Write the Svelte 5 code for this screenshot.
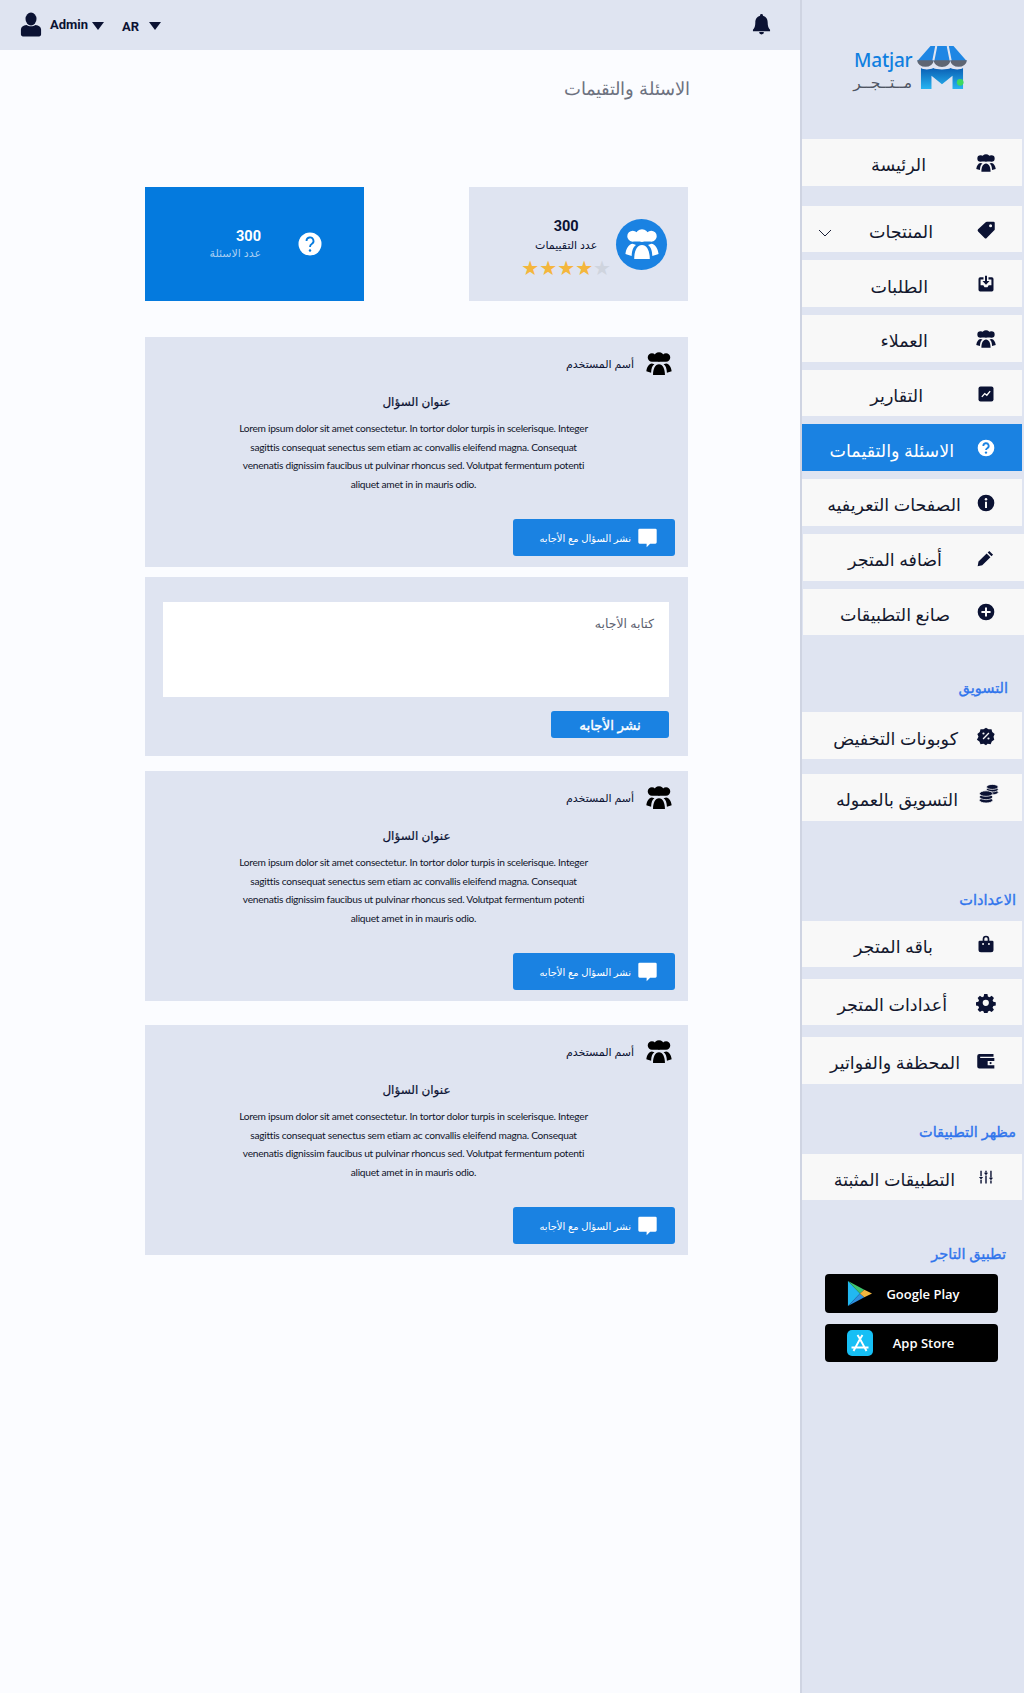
<script>
  const users = 'M1.600 5a3.900 3.900 0 1 0 7.800 0a3.900 3.900 0 1 0-7.800 0zM14.600 5a3.900 3.900 0 1 0 7.800 0a3.900 3.900 0 1 0-7.800 0zM7.500 4.500a4.500 4.500 0 1 0 9 0a4.500 4.500 0 1 0-9 0zM5.500 5v3.800h13V5zM6.500 21C6.500 15.500 8.500 11.200 12 11.200S17.500 15.500 17.500 21zM.3 17.600C.8 13.600 2.600 10.800 5.400 10.400L7.800 11.200C5.800 12.500 4.900 14.800 4.700 19zM23.700 17.600C23.200 13.600 21.400 10.800 18.600 10.400L16.200 11.200C18.200 12.500 19.100 14.800 19.300 19z';
  const menuA = [
    { t: 'الرئيسة', r: 52, m: 0, i: 'users' },
    { t: 'المنتجات', r: 45, m: 20, i: 'tag', chev: true },
    { t: 'الطلبات', r: 50, m: 8, i: 'inbox' },
    { t: 'العملاء', r: 50, m: 8, i: 'users' },
    { t: 'التقارير', r: 55, m: 8, i: 'chart' },
    { t: 'الاسئلة والتقيمات', r: 24, m: 8, i: 'help', on: true },
    { t: 'الصفحات التعريفيه', r: 17, m: 8, i: 'info' },
    { t: 'أضافه المتجر', r: 36, m: 8, i: 'pen', ind: true },
    { t: 'صانع التطبيقات', r: 28, m: 8, i: 'plus', ind: true }
  ];
  const menuB = [
    { t: 'كوبونات التخفيض', r: 20, m: 0, i: 'badge' },
    { t: 'التسويق بالعموله', r: 20, m: 15, i: 'coins' }
  ];
  const menuC = [
    { t: 'باقه المتجر', r: 45, m: 0, i: 'bag' },
    { t: 'أعدادات المتجر', r: 31, m: 11.5, i: 'gear' },
    { t: 'المحظفة والفواتير', r: 18, m: 11.5, i: 'wallet' }
  ];
  const menuD = [{ t: 'التطبيقات المثبتة', r: 23, m: 0, i: 'sliders' }];
  const lorem = 'Lorem ipsum dolor sit amet consectetur. In tortor dolor turpis in scelerisque. Integer sagittis consequat senectus sem etiam ac convallis eleifend magna. Consequat venenatis dignissim faucibus ut pulvinar rhoncus sed. Volutpat fermentum potenti aliquet amet in in mauris odio.';
</script>

{#snippet icon(name)}
  <svg class="ic ic-{name}" viewBox={name === 'users' ? '0 0 24 21' : '0 0 24 24'} aria-hidden="true">
    {#if name === 'users'}
      <path d={users} />
    {:else if name === 'tag'}
      <path d="M13 2h8a1.500 1.500 0 0 1 1.500 1.500V11a2 2 0 0 1-.6 1.400L12.800 21.500a1.800 1.800 0 0 1-2.500 0L2.500 13.700a1.800 1.800 0 0 1 0-2.500l9.100-8.600A2 2 0 0 1 13 2zM17.500 5.200a1.800 1.800 0 1 0 0 3.600 1.800 1.800 0 0 0 0-3.600z" fill-rule="evenodd" />
    {:else if name === 'inbox'}
      <path d="M5 4h4v2.500H5.500v7h3.300l1.400 2.500h3.600l1.400-2.500h3.300v-7H15V4h4a2 2 0 0 1 2 2v13a2 2 0 0 1-2 2H5a2 2 0 0 1-2-2V6a2 2 0 0 1 2-2zM10.800 2h2.400v6.500h3L12 13 7.800 8.500h3z" />
    {:else if name === 'chart'}
      <rect x="3" y="3" width="18" height="18" rx="2.500" />
      <path d="M7 15.500l3.500-4 2.500 2 4-5" fill="none" stroke="#fff" stroke-width="1.600" />
    {:else if name === 'help'}
      <circle cx="12" cy="12" r="10" />
      <path d="M8.800 9.500a3.200 3.200 0 1 1 4.700 2.800c-1 .6-1.500 1-1.500 2.200" fill="none" stroke="var(--cut)" stroke-width="2.200" />
      <circle cx="12" cy="17.500" r="1.400" fill="var(--cut)" />
    {:else if name === 'info'}
      <circle cx="12" cy="12" r="10" />
      <circle cx="12" cy="7.500" r="1.500" fill="#f8f8f8" />
      <rect x="10.800" y="10.500" width="2.400" height="7.500" fill="#f8f8f8" />
    {:else if name === 'pen'}
      <path d="M16 3.500l4.500 4.500-2 2L14 5.500zM12.800 6.700l4.500 4.500-9.800 9.600-5.500 1 1-5.500z" />
    {:else if name === 'plus'}
      <circle cx="12" cy="12" r="10" />
      <path d="M12 6.500v11M6.500 12h11" stroke="#f8f8f8" stroke-width="2.400" />
    {:else if name === 'badge'}
      <path d="M12 2l3 2 3.600-.2.900 3.500 2.900 2.200L21 13l.9 3.500-3 2-1.300 3.300-3.600-.5L12 23l-3-1.700-3.600.5-1.300-3.300-3-2L3 13 1.600 9.500l2.900-2.200.9-3.500L9 4z" />
      <path d="M8.500 15.500l7-7" stroke="#f8f8f8" stroke-width="1.600" />
      <circle cx="9" cy="9" r="1.300" fill="#f8f8f8" /><circle cx="15" cy="15" r="1.300" fill="#f8f8f8" />
    {:else if name === 'coins'}
      <g stroke="#f8f8f8" stroke-width=".9">
        <ellipse cx="16" cy="10" rx="7" ry="3" />
        <ellipse cx="16" cy="6.500" rx="7" ry="3" />
        <ellipse cx="16" cy="3.500" rx="7" ry="3" />
        <ellipse cx="8.500" cy="19.500" rx="8" ry="3.300" />
        <ellipse cx="8.500" cy="15.500" rx="8" ry="3.300" />
        <ellipse cx="8.500" cy="11.500" rx="8" ry="3.300" />
      </g>
    {:else if name === 'bag'}
      <path d="M8 8V6a4 4 0 0 1 8 0v2h3.500a1.500 1.500 0 0 1 1.500 1.500V19a3 3 0 0 1-3 3H6a3 3 0 0 1-3-3V9.500A1.500 1.500 0 0 1 4.500 8zm2 0h4V6a2 2 0 0 0-4 0z" fill-rule="evenodd" />
      <circle cx="8.500" cy="12" r="1.200" fill="#f8f8f8" /><circle cx="15.500" cy="12" r="1.200" fill="#f8f8f8" />
    {:else if name === 'gear'}
      <path fill-rule="evenodd" d="M10 1.500h4l.6 3 2 .9 2.600-1.700 2.800 2.800-1.700 2.600.9 2 3 .6v4l-3 .6-.9 2 1.700 2.600-2.800 2.800-2.600-1.700-2 .9-.6 3h-4l-.6-3-2-.9-2.600 1.700-2.800-2.800 1.700-2.600-.9-2-3-.6v-4l3-.6.900-2-1.700-2.600 2.800-2.800 2.600 1.700 2-.9zM12 8.500a3.800 3.800 0 1 0 0 7.600 3.800 3.800 0 0 0 0-7.600z" transform="translate(0 -.3) scale(.98)" />
    {:else if name === 'wallet'}
      <path fill-rule="evenodd" d="M4 3.500h17v3.500H5v1.500h17V21H4a2.500 2.500 0 0 1-2.500-2.500V6A2.500 2.500 0 0 1 4 3.500zM14 12v5h8v-5z" />
      <circle cx="17.500" cy="14.500" r="1.300" />
    {:else if name === 'sliders'}
      <path d="M5 3v8M5 16v5M12 3v3M12 10v11M19 3v10M19 17v4" fill="none" stroke="currentColor" stroke-width="2" />
      <path d="M2 12h6l-3 3.500zM9 6h6l-3 3.500zM16 13h6l-3 3.500z" />
    {/if}
  </svg>
{/snippet}

{#snippet item(m)}
  <div class="item" class:on={m.on} class:ind={m.ind} style="margin-top:{m.m}px">
    {#if m.chev}
      <svg class="chev" viewBox="0 0 14 8" aria-hidden="true"><path d="M1 1l6 6 6-6" fill="none" stroke="#1a1f36" stroke-width="1" /></svg>
    {/if}
    <span class="item-ic">{@render icon(m.i)}</span>
    <span class="item-t" style="margin-right:{m.r}px">{m.t}</span>
  </div>
{/snippet}

{#snippet question()}
  <article class="panel q">
    <header class="q-head">
      <svg class="q-user" viewBox="0 0 24 21" aria-hidden="true"><path d={users} /></svg>
      <span>أسم المستخدم</span>
    </header>
    <h3>عنوان السؤال</h3>
    <p dir="ltr">{lorem}</p>
    <button class="post">
      <svg viewBox="0 0 24 24" aria-hidden="true"><path d="M3 2h18a1.500 1.500 0 0 1 1.500 1.500v14A1.500 1.500 0 0 1 21 19h-6l-4 4v-4H3a1.500 1.500 0 0 1-1.500-1.500v-14A1.500 1.500 0 0 1 3 2z" /></svg>
      <span>نشر السؤال مع الأجابه</span>
    </button>
  </article>
{/snippet}

<div class="page">
  <main>
    <div class="topbar">
      <div class="top-left">
        <svg class="person" viewBox="0 0 24 26" aria-hidden="true"><ellipse cx="12" cy="7" rx="6" ry="7" /><path d="M7 13.500c3 2 7 2 10 0 3.500.5 6 2 6 5V24a2 2 0 0 1-2 2H3a2 2 0 0 1-2-2v-5.500c0-3 2.500-4.500 6-5z" /></svg>
        <b class="admin">Admin</b>
        <i class="tri"></i>
        <b class="lang">AR</b>
        <i class="tri"></i>
      </div>
      <svg class="bell" viewBox="0 0 20 22" aria-hidden="true"><path d="M10 0a1.500 1.500 0 0 1 1.500 1.700C15 2.500 16.500 5.500 16.500 9c0 4 1 6 2.500 7.500V18H1v-1.500C2.500 15 3.500 13 3.500 9c0-3.500 1.500-6.500 5-7.300A1.500 1.500 0 0 1 10 0zM7.500 19h5a2.500 2.500 0 0 1-5 0z" /></svg>
    </div>

    <div class="content">
      <h1>الاسئلة والتقيمات</h1>
      <div class="stats">
        <section class="stat grey">
          <span class="circle"><svg viewBox="0 0 24 21" aria-hidden="true"><path d={users} /></svg></span>
          <div class="stat-txt">
            <strong>300</strong>
            <small>عدد التقييمات</small>
            <div class="stars" dir="ltr">
              <span class="g">★</span><span class="g">★</span><span class="g">★</span><span class="g">★</span><span class="e">★</span>
            </div>
          </div>
        </section>
        <section class="stat blue">
          <svg class="qmark" viewBox="0 0 24 24" aria-hidden="true"><circle cx="12" cy="12" r="11.500" fill="#fff" /><path d="M8.500 9a3.500 3.500 0 1 1 5.200 3c-1.200.7-1.700 1.300-1.700 3" fill="none" stroke="#047ade" stroke-width="1.800" /><circle cx="12" cy="18.500" r="1.200" fill="#047ade" /></svg>
          <div class="stat-txt">
            <strong>300</strong>
            <small>عدد الاسئلة</small>
          </div>
        </section>
      </div>

      {@render question()}

      <section class="panel answer">
        <div class="ta">كتابه الأجابه</div>
        <button class="publish">نشر الأجابه</button>
      </section>

      <div class="gap15">{@render question()}</div>
      <div class="gap24">{@render question()}</div>
    </div>
  </main>

  <aside>
    <div class="logo" dir="ltr">
      <div class="logo-t">
        <span class="l-en">Matjar</span>
        <span class="l-ar" dir="rtl">مــتــجــر</span>
      </div>
      <svg class="l-mark" viewBox="0 0 52 46" aria-hidden="true">
        <defs><linearGradient id="lg" x1="0" y1="0" x2="0" y2="1"><stop offset="0" stop-color="#0a5fb4" /><stop offset="1" stop-color="#27b5f2" /></linearGradient></defs>
        <path d="M14 0h24l14 16H0z" fill="#1e86e4" />
        <path d="M0 15a8.670 7 0 0 0 17.330 0 8.670 7 0 0 0 17.340 0 8.670 7 0 0 0 17.330 0z" fill="#5f6673" />
        <path d="M20 0l-3 15M32 0l3 15" stroke="#dfe4f1" stroke-width="2.200" />
        <path d="M4 23c3 2 9 2 13 0 3 2 15 2 18 0 4 2 10 2 13 0v22H37V31l-11 9-11-9v14H4z" fill="url(#lg)" />
        <circle cx="45" cy="38" r="3.500" fill="#3ed95f" />
      </svg>
    </div>

    {#each menuA as m}{@render item(m)}{/each}
    <h4 class="h-mark">التسويق</h4>
    {#each menuB as m}{@render item(m)}{/each}
    <h4 class="h-set">الاعدادات</h4>
    {#each menuC as m}{@render item(m)}{/each}
    <h4 class="h-look">مظهر التطبيقات</h4>
    {#each menuD as m}{@render item(m)}{/each}
    <h4 class="h-app">تطبيق التاجر</h4>

    <div class="store first" dir="ltr">
      <svg class="st-ic" viewBox="0 0 26 28" aria-hidden="true">
        <path d="M1 1l12.500 13L1 27z" fill="#22b8f0" />
        <path d="M1 1l17 9-4.500 4z" fill="#3fc46e" />
        <path d="M1 27l17-9-4.500-4z" fill="#2f8fe0" />
        <path d="M18 10l8 4-8 4-4.500-4z" fill="#f3b63f" />
      </svg>
      <span>Google Play</span>
    </div>
    <div class="store" dir="ltr">
      <svg class="st-ic as" viewBox="0 0 26 26" aria-hidden="true">
        <rect width="26" height="26" rx="5" fill="#16bff5" />
        <path d="M13 9L6.500 21M13 9l6.500 12M10.500 5L13 9M15.500 5L13 9M4.500 17.500h17" stroke="#fff" stroke-width="1.900" fill="none" />
      </svg>
      <span>App Store</span>
    </div>
  </aside>
</div>

<style>
  :global(body) { margin: 0; background: #fbfcff; }
  .page {
    --ink: #0b1233;
    direction: ltr;
    display: flex;
    width: 1024px;
    min-height: 1693px;
    font-family: "Open Sans", "Noto Sans", "DejaVu Sans", sans-serif;
    color: var(--ink);
  }
  main { width: 800px; flex: none; }
  .topbar {
    height: 50px;
    background: #dfe4f1;
    display: flex;
    align-items: center;
    justify-content: space-between;
    padding: 0 29px 0 20px;
    box-sizing: border-box;
  }
  .top-left { display: flex; align-items: center; }
  .person { width: 22px; height: 25px; fill: var(--ink); margin-top: -2px; }
  .admin { font-family: Roboto, sans-serif; font-size: 13px; margin-left: 8px; margin-top: -2px; }
  .lang { font-family: Roboto, sans-serif; font-size: 13px; margin-left: 18px; margin-right: 6px; margin-top: 2px; }
  .tri { width: 0; height: 0; border-left: 6px solid transparent; border-right: 6px solid transparent; border-top: 8px solid var(--ink); margin-left: 4px; margin-top: 2px; }
  .bell { width: 19px; height: 21px; fill: var(--ink); margin-top: -1px; }

  .content { direction: rtl; padding: 25px 112px 0 145px; }
  h1 { margin: 0 -2px 0 0; font-size: 17.500px; font-weight: 300; line-height: 26px; color: #6d7280; }
  .stats { display: flex; justify-content: space-between; margin-top: 86px; margin-bottom: 36px; }
  .stat { width: 219px; height: 114px; box-sizing: border-box; display: flex; align-items: center; }
  .grey { background: #dfe4f1; padding-right: 21px; gap: 5px; }
  .grey .stat-txt { margin-top: 8px; }
  .blue { background: #047ade; color: #fff; padding-right: 42px; gap: 37px; }
  .circle { width: 51px; height: 51px; border-radius: 50%; background: #1a82e2; display: flex; align-items: center; justify-content: center; flex: none; }
  .circle svg { width: 34px; height: 30px; fill: #fff; }
  .stat-txt { display: flex; flex-direction: column; align-items: center; }
  .blue .stat-txt { align-items: flex-start; margin-top: -2px; }
  .stat-txt strong { font-size: 14.500px; line-height: 18px; font-family: Roboto, sans-serif; }
  .stat-txt small { font-size: 11px; line-height: 18px; }
  .blue small { color: #a9cff3; line-height: 13px; }
  .qmark { width: 24px; height: 24px; flex: none; }
  .stars { display: flex; font-size: 20px; line-height: 22px; margin-top: 3px; font-family: "DejaVu Sans", sans-serif; }
  .g { color: #f4b63c; } .e { color: #cfd4de; }

  .panel { background: #dfe4f1; box-sizing: border-box; }
  .q { height: 230px; padding: 13px 13px 0 13px; display: flex; flex-direction: column; }
  .q-head { display: flex; align-items: center; gap: 12px; padding-right: 3px; font-size: 11px; height: 26px; }
  .q-user { width: 26px; height: 23px; fill: #000; }
  h3 { margin: 15px 0 0; font-size: 12px; font-weight: 400; line-height: 22px; text-align: center; -webkit-text-stroke: .2px; }
  p { margin: 6px auto 0; width: 356px; font-family: Lato, sans-serif; font-size: 10.200px; letter-spacing: -.27px; line-height: 18.500px; text-align: center; transform: translateX(-3px); color: #10142a; }
  .post {
    align-self: flex-start;
    margin-top: auto;
    margin-bottom: 11px;
    width: 162px; height: 37px;
    background: #1a82e2; color: #fff; border: 0; border-radius: 3px;
    display: flex; align-items: center; gap: 6px; padding: 0 17px 0 0;
    font: inherit; font-size: 10px;
    direction: rtl;
  }
  .post svg { width: 21px; height: 21px; fill: #fff; }
  .answer { margin-top: 10px; height: 179px; padding: 25px 19px 0 18px; display: flex; flex-direction: column; align-items: flex-start; }
  .ta { width: 100%; height: 95px; background: #fff; box-sizing: border-box; padding: 13px 15px; font-size: 12.500px; color: #5d6270; }
  .publish { margin-top: 14px; width: 118px; height: 27px; background: #1a82e2; color: #fff; border: 0; border-radius: 3px; font: inherit; font-size: 13.500px; -webkit-text-stroke: .35px #fff; }
  .gap15 { margin-top: 15px; } .gap24 { margin-top: 24px; }

  aside { width: 224px; flex: none; box-sizing: border-box; direction: rtl; background: #dfe4f1; border-left: 2px solid #cfd4e2; }
  .logo { height: 139px; box-sizing: border-box; padding: 46px 0 0 52px; display: flex; gap: 5px; align-items: flex-start; }
  .logo-t { display: flex; flex-direction: column; width: 58px; padding-top: 4px; }
  .l-en { font-family: "Noto Sans", sans-serif; font-size: 19px; line-height: 21px; color: #0f7fe0; font-weight: 500; letter-spacing: -.2px; }
  .l-ar { font-size: 15.500px; line-height: 20px; padding-top: 1px; color: #4f5563; white-space: nowrap; }
  .l-mark { width: 50px; height: 44px; }
  .item {
    height: 46.700px; background: #f8f8f8; box-sizing: border-box;
    display: flex; align-items: center;
    position: relative;
    padding-right: 24px;
    margin-left: 0; margin-right: 2px;
    font-size: 17.500px; color: #14182e;
    --cut: #f8f8f8;
  }
  .item.ind { margin-left: 1px; margin-right: 0; padding-right: 26px; }
  .item.on { background: #1a82e2; color: #fff; --cut: #1a82e2; }
  .item-ic { width: 20px; height: 20px; display: flex; flex: none; margin-top: 1px; transform: translateX(-2px); }
  .item-t { transform: translateY(2px); }
  .ic { width: 20px; height: 20px; fill: var(--ink); color: var(--ink); }
  .ic-coins { transform: translate(3px, -4px); }
  .ic-sliders { transform: scale(.85); }
  .on .ic { fill: #fff; }
  .chev { position: absolute; left: 16px; top: 23px; width: 14px; height: 8px; }
  h4 { margin: 0; color: #2f74ec; font-weight: 400; -webkit-text-stroke: .35px #2f74ec; font-size: 14.500px; line-height: 20px; }
  .h-mark { padding: 43px 16px 14px 0; }
  .h-set { padding: 69px 8px 11px 0; }
  .h-look { padding: 38px 8px 12px 0; }
  .h-app { padding: 44px 18px 10px 0; }
  .store { margin: 11px 26px 0 23px; height: 38.500px; background: #000; border-radius: 4px; display: flex; align-items: center; color: #fff; font-size: 13px; font-weight: 600; }
  .store.first { margin-top: 0; }
  .st-ic { width: 25px; height: 27px; margin-left: 22px; flex: none; }
  .st-ic.as { height: 26px; width: 26px; }
  .store span { flex: 1; text-align: center; padding-right: 24px; }
</style>
